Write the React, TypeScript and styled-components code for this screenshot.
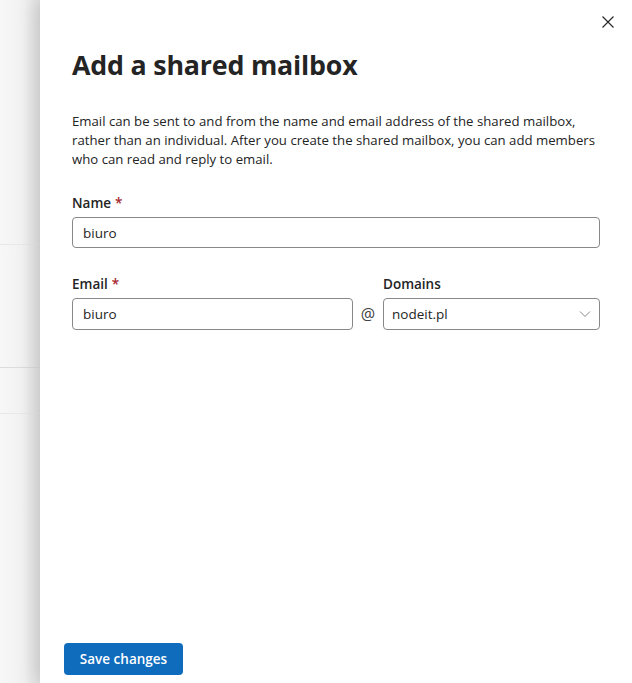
import React from "react";
import styled, { createGlobalStyle } from "styled-components";

const Global = createGlobalStyle`
  html, body { margin: 0; padding: 0; }
  body {
    font-family: "Open Sans", "Noto Sans", Arial, sans-serif;
    color: #242424;
    background: #f5f5f5;
  }
  * { box-sizing: border-box; }
`;

const Page = styled.div`
  display: flex;
  width: 632px;
  height: 683px;
  overflow: hidden;
`;

const Backdrop = styled.div`
  width: 40px;
  flex: none;
  display: flex;
  flex-direction: column;
  background: linear-gradient(to right, #f7f7f7 0%, #f1f1f1 60%, #e2e2e2 100%);
`;

const BackRow = styled.div<{ $h: number; $strong?: boolean }>`
  height: ${(p) => p.$h}px;
  flex: none;
  border-bottom: 1px solid ${(p) => (p.$strong ? "#dcdcdc" : "#e8e8e8")};
`;

const Panel = styled.div`
  position: relative;
  flex: 1;
  background: #ffffff;
  box-shadow: -6px 0 18px rgba(0, 0, 0, 0.12);
  display: flex;
  flex-direction: column;
`;

const Body = styled.div`
  padding: 47px 32px 0 32px;
  flex: 1;
`;

const CloseButton = styled.button`
  position: absolute;
  top: 14px;
  right: 16px;
  width: 16px;
  height: 16px;
  padding: 0;
  border: none;
  background: transparent;
  display: flex;
  align-items: center;
  justify-content: center;
  cursor: pointer;
`;

const Title = styled.h1`
  margin: 0;
  font-size: 26.8px;
  line-height: 36px;
  font-weight: 700;
  color: #242424;
  letter-spacing: -0.2px;
`;

const Description = styled.p`
  margin: 29px 0 0 0;
  font-size: 13.2px;
  line-height: 19px;
  color: #242424;
`;

const Field = styled.div<{ $top: number }>`
  margin-top: ${(p) => p.$top}px;
`;

const Label = styled.label`
  display: block;
  font-size: 13.5px;
  line-height: 20px;
  font-weight: 600;
  color: #242424;
  margin-bottom: 4px;
`;

const Req = styled.span`
  color: #a4262c;
  margin-left: 4px;
`;

const TextInput = styled.input`
  width: 100%;
  height: 31px;
  border: 1px solid #8a8886;
  border-radius: 4px;
  padding: 0 10px;
  font-family: inherit;
  font-size: 13.5px;
  color: #242424;
  background: #fff;
  outline: none;
`;

const EmailGrid = styled.div`
  display: grid;
  grid-template-columns: 1fr 30px 217px;
  grid-template-rows: auto 32px;
  margin-top: 26px;
`;

const At = styled.div`
  display: flex;
  align-items: center;
  justify-content: center;
  font-size: 16px;
  color: #424242;
  grid-row: 2;
  grid-column: 2;
`;

const Select = styled.div`
  grid-row: 2;
  grid-column: 3;
  display: flex;
  align-items: center;
  justify-content: space-between;
  height: 32px;
  border: 1px solid #8a8886;
  border-radius: 4px;
  padding: 0 7px 0 8px;
  font-size: 13.5px;
  color: #242424;
`;

const Footer = styled.div`
  padding: 0 24px 8px 24px;
  display: flex;
`;

const PrimaryButton = styled.button`
  width: 119px;
  height: 32px;
  border: none;
  border-radius: 4px;
  background: #0f6cbd;
  color: #fff;
  font-family: inherit;
  font-size: 13.5px;
  font-weight: 600;
  cursor: pointer;
`;

export default function App() {
  return (
    <>
      <Global />
      <Page>
        <Backdrop>
          <BackRow $h={245} />
          <BackRow $h={123} $strong />
          <BackRow $h={46} />
        </Backdrop>
        <Panel>
          <CloseButton aria-label="Close">
            <svg width="12" height="12" viewBox="0 0 12 12">
              <path d="M0.5 0.5 L11.5 11.5 M11.5 0.5 L0.5 11.5" stroke="#242424" strokeWidth="1.1" />
            </svg>
          </CloseButton>
          <Body>
            <Title>Add a shared mailbox</Title>
            <Description>
              Email can be sent to and from the name and email address of the shared mailbox,
              rather than an individual. After you create the shared mailbox, you can add members
              who can read and reply to email.
            </Description>
            <Field $top={24}>
              <Label>
                Name<Req>*</Req>
              </Label>
              <TextInput defaultValue="biuro" />
            </Field>
            <EmailGrid>
              <Label style={{ gridColumn: 1 }}>
                Email<Req>*</Req>
              </Label>
              <Label style={{ gridColumn: 3 }}>Domains</Label>
              <TextInput defaultValue="biuro" style={{ gridRow: 2, gridColumn: 1, height: 32 }} />
              <At>@</At>
              <Select>
                <span>nodeit.pl</span>
                <svg width="14" height="8" viewBox="0 0 14 8">
                  <path d="M2 1.5 L7 6.5 L12 1.5" fill="none" stroke="#8a8886" strokeWidth="1" />
                </svg>
              </Select>
            </EmailGrid>
          </Body>
          <Footer>
            <PrimaryButton>Save changes</PrimaryButton>
          </Footer>
        </Panel>
      </Page>
    </>
  );
}
